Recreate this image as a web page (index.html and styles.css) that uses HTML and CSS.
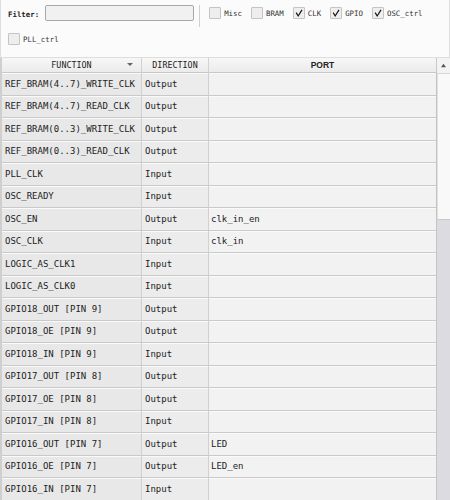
FILE: index.html
```html
<!DOCTYPE html>
<html lang="en">
<head>
    <meta charset="UTF-8">
    <title>Pin Functions</title>
    <link rel="stylesheet" href="styles.css">
</head>
<body>

<div class="toolbar">
    <div class="toolbar-row">
        <label class="filter-label" for="filter">Filter:</label>
        <input type="text" id="filter" class="filter-input">
        <span class="sep"></span>
        <span class="check"><span class="box"></span>Misc</span>
        <span class="check"><span class="box"></span>BRAM</span>
        <span class="check"><span class="box on"><svg viewBox="0 0 12 12"><path d="M2.6 5.6 L5 9.6 L9.6 2.2" /></svg></span>CLK</span>
        <span class="check"><span class="box on"><svg viewBox="0 0 12 12"><path d="M2.6 5.6 L5 9.6 L9.6 2.2" /></svg></span>GPIO</span>
        <span class="check"><span class="box on"><svg viewBox="0 0 12 12"><path d="M2.6 5.6 L5 9.6 L9.6 2.2" /></svg></span>OSC_ctrl</span>
    </div>
    <div class="toolbar-row second">
        <span class="check"><span class="box"></span>PLL_ctrl</span>
    </div>
</div>

<div class="grid">
    <div class="table-wrap">
        <table class="pins">
            <colgroup>
                <col class="c-func">
                <col class="c-dir">
                <col class="c-port">
            </colgroup>
            <thead>
                <tr>
                    <th class="sorted">FUNCTION<span class="arrow"></span></th>
                    <th>DIRECTION</th>
                    <th class="port-head">PORT</th>
                </tr>
            </thead>
            <tbody id="rows"></tbody>
        </table>
    </div>
    <div class="scrollbar">
        <div class="scroll-up"><svg viewBox="0 0 8 6"><path d="M1 5 L4 1 L7 5 Z" /></svg></div>
        <div class="thumb"></div>
    </div>
</div>

<script>
    const pins = [
        ['REF_BRAM(4..7)_WRITE_CLK', 'Output', ''],
        ['REF_BRAM(4..7)_READ_CLK', 'Output', ''],
        ['REF_BRAM(0..3)_WRITE_CLK', 'Output', ''],
        ['REF_BRAM(0..3)_READ_CLK', 'Output', ''],
        ['PLL_CLK', 'Input', ''],
        ['OSC_READY', 'Input', ''],
        ['OSC_EN', 'Output', 'clk_in_en'],
        ['OSC_CLK', 'Input', 'clk_in'],
        ['LOGIC_AS_CLK1', 'Input', ''],
        ['LOGIC_AS_CLK0', 'Input', ''],
        ['GPIO18_OUT [PIN 9]', 'Output', ''],
        ['GPIO18_OE [PIN 9]', 'Output', ''],
        ['GPIO18_IN [PIN 9]', 'Input', ''],
        ['GPIO17_OUT [PIN 8]', 'Output', ''],
        ['GPIO17_OE [PIN 8]', 'Output', ''],
        ['GPIO17_IN [PIN 8]', 'Input', ''],
        ['GPIO16_OUT [PIN 7]', 'Output', 'LED'],
        ['GPIO16_OE [PIN 7]', 'Output', 'LED_en'],
        ['GPIO16_IN [PIN 7]', 'Input', '']
    ];

    const tbody = document.getElementById('rows');
    pins.forEach(p => {
        const tr = document.createElement('tr');
        p.forEach((text, i) => {
            const td = document.createElement('td');
            td.className = ['func', 'dir', 'port'][i];
            td.textContent = text;
            tr.appendChild(td);
        });
        tbody.appendChild(tr);
    });
</script>

</body>
</html>
```

FILE: styles.css
```css
body {
    margin: 0;
    font-family: 'DejaVu Sans Mono', monospace;
    background: #f4f4f4;
    color: #222;
    overflow: hidden;
}
.toolbar {
    height: 58px;
    box-sizing: border-box;
    background: #fbfbfb;
    border: 1px solid #dedede;
    border-top: none;
    padding: 5px 0 0 7px;
}
.toolbar-row {
    display: flex;
    align-items: center;
    height: 22px;
}
.toolbar-row.second {
    margin-top: 6px;
    height: 14px;
}
.filter-label {
    font-size: 7.4px;
    font-weight: bold;
    color: #222;
    margin-right: 6px;
    align-self: flex-start;
    margin-top: 5px;
}
.filter-input {
    width: 149px;
    height: 16px;
    box-sizing: border-box;
    border: 1px solid #a8a8a8;
    border-radius: 2px;
    background: #f1f1f1;
    margin: 0;
    padding: 0 3px;
    align-self: flex-start;
}
.sep {
    width: 1px;
    height: 22px;
    background: #cfcfcf;
    margin: 0 9px 0 5px;
    align-self: flex-start;
}
.check {
    display: flex;
    align-items: center;
    font-size: 7.4px;
    color: #333;
    margin-right: 9px;
    align-self: flex-start;
    margin-top: 2px;
}
.toolbar-row.second .check {
    margin-top: 0;
}
.box {
    width: 12px;
    height: 12px;
    box-sizing: border-box;
    border: 1px solid #c4c4c4;
    background: #eeeeee;
    border-radius: 1px;
    margin-right: 3px;
    display: flex;
}
.box svg {
    width: 10px;
    height: 10px;
    fill: none;
    stroke: #111;
    stroke-width: 1.4;
}
.grid {
    display: flex;
    height: 442px;
}
.table-wrap {
    width: 437px;
    overflow: hidden;
    border-left: 2px solid #cfcfcf;
    box-sizing: border-box;
}
.pins {
    width: 435px;
    table-layout: fixed;
    border-collapse: separate;
    border-spacing: 0;
    font-size: 9px;
}
.c-func { width: 140px; }
.c-dir { width: 67px; }
.c-port { width: 228px; }
.pins th {
    height: 14px;
    padding: 0;
    font-weight: normal;
    font-size: 8.4px;
    background: linear-gradient(#f7f7f7, #ebebeb);
    border-right: 1px solid #d2d2d2;
    border-bottom: 1px solid #c8c8c8;
    position: relative;
    color: #222;
}
.pins th.port-head {
    font-family: 'Liberation Sans', Arial, sans-serif;
    font-weight: bold;
    font-size: 8.5px;
    border-right: 1px solid #c8c8c8;
}
.arrow {
    position: absolute;
    right: 8px;
    top: 5px;
    border-left: 3px solid transparent;
    border-right: 3px solid transparent;
    border-top: 3px solid #666;
}
.pins td {
    height: 21.5px;
    padding: 0 0 0 3px;
    white-space: nowrap;
    overflow: hidden;
    border-bottom: 1px solid #c9c9c9;
    border-right: 1px solid #d0d0d0;
    box-shadow: inset 0 1px 0 #fafafa;
}
.pins td.func {
    background: #e8e8e8;
    padding-left: 3px;
}
.pins td.dir {
    background: #ececec;
    padding-left: 3px;
}
.pins td.port {
    background: #f2f2f2;
    padding-left: 2px;
    border-right: 1px solid #c4c4c4;
}
.scrollbar {
    width: 13px;
    background: #dcdce0;
    display: flex;
    flex-direction: column;
}
.scroll-up {
    height: 15px;
    background: #f3f3f3;
    display: flex;
    justify-content: center;
    align-items: center;
    border-bottom: 1px solid #d6d6d6;
}
.scroll-up svg {
    width: 7px;
    height: 5px;
    fill: #555;
}
.thumb {
    height: 145px;
    background: #f9f9f9;
    border-left: 1px solid #e0e0e0;
    border-bottom: 1px solid #c8c8cc;
}
```
